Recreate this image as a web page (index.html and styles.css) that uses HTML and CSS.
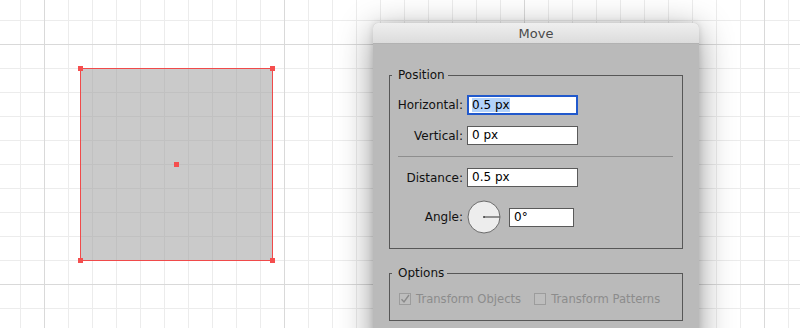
FILE: index.html
```html
<!DOCTYPE html>
<html>
	<head>
		<meta charset="UTF-8">
		<title>Move</title>
		<link rel="stylesheet" href="styles.css">
	</head>
	<body>
		<div id="canvas">
			<div class="shape"></div>
			<span class="handle h-tl"></span>
			<span class="handle h-tr"></span>
			<span class="handle h-bl"></span>
			<span class="handle h-br"></span>
			<span class="handle h-c"></span>

			<div id="dialog">
				<div class="titlebar">Move</div>
				<div class="body">
					<fieldset class="group">
						<legend>Position</legend>
						<div class="row first">
							<label>Horizontal:</label>
							<div class="field focus"><span class="sel">0.5 px</span></div>
						</div>
						<div class="row">
							<label>Vertical:</label>
							<div class="field">0 px</div>
						</div>
						<div class="sep"></div>
						<div class="row">
							<label>Distance:</label>
							<div class="field">0.5 px</div>
						</div>
						<div class="row angle">
							<label>Angle:</label>
							<svg class="dial" width="34" height="34" viewBox="0 0 34 34">
								<circle cx="17" cy="17" r="16" fill="#ededed" stroke="#6b6b6b" stroke-width="1"/>
								<line x1="17" y1="17" x2="33" y2="17" stroke="#5e5e5e" stroke-width="1.3"/>
								<circle cx="17" cy="17" r="1" fill="#444"/>
							</svg>
							<div class="field small">0°</div>
						</div>
					</fieldset>

					<fieldset class="group options">
						<legend>Options</legend>
						<div class="checks">
							<div class="check">
								<span class="box">
									<svg width="10" height="10" viewBox="0 0 10 10"><path d="M1.5 5.2 L4 8 L9 1" fill="none" stroke="#8a8a8a" stroke-width="1.4"/></svg>
								</span>
								<span>Transform Objects</span>
							</div>
							<div class="check">
								<span class="box"></span>
								<span>Transform Patterns</span>
							</div>
						</div>
					</fieldset>
				</div>
			</div>
		</div>
	</body>
</html>
```

FILE: styles.css
```css
html, body{
	margin: 0;
	padding: 0;
	overflow: hidden;
}
#canvas{
	position: relative;
	width: 800px;
	height: 328px;
	overflow: hidden;
	background-color: #fff;
	background-image:
		linear-gradient(to right, #d9d9d9 1px, transparent 1px),
		linear-gradient(to bottom, #d9d9d9 1px, transparent 1px),
		linear-gradient(to right, #ececec 1px, transparent 1px),
		linear-gradient(to bottom, #ececec 1px, transparent 1px);
	background-size: 240px 240px, 240px 240px, 24px 24px, 24px 24px;
	background-position: 44px 44px, 44px 44px, 20px 20px, 20px 20px;
	font-family: "DejaVu Sans", "Noto Sans", sans-serif;
	font-size: 12px;
	color: #111;
}

/* selected object on the artboard */
.shape{
	position: absolute;
	left: 80px;
	top: 68px;
	width: 193px;
	height: 193px;
	box-sizing: border-box;
	border: 1px solid #f04a4a;
	background-color: rgba(150,150,150,.5);
}
.handle{
	position: absolute;
	width: 5px;
	height: 5px;
	background-color: #f54e4e;
}
.h-tl{ left: 78px; top: 66px; }
.h-tr{ left: 270px; top: 66px; }
.h-bl{ left: 78px; top: 258px; }
.h-br{ left: 270px; top: 258px; }
.h-c{ left: 174px; top: 162px; }

/* dialog window */
#dialog{
	position: absolute;
	left: 373px;
	top: 23px;
	width: 326px;
	height: 330px;
	border-radius: 5px 5px 0 0;
	background-color: #bababa;
	box-shadow: 0 8px 34px rgba(0,0,0,.42), 0 0 6px rgba(0,0,0,.12);
}
.titlebar{
	height: 20px;
	line-height: 22px;
	text-align: center;
	font-size: 13px;
	color: #4a4a4a;
	border-radius: 5px 5px 0 0;
	background: linear-gradient(#efefef, #dcdcdc);
	border-bottom: 1px solid #b2b2b2;
}
.body{
	padding: 24px 16px 0 16px;
}
.group{
	margin: 0;
	padding: 0 9px 14px 2px;
	border: 1px solid #575757;
	min-width: 0;
}
.group legend{
	padding: 0 3px 0 6px;
	line-height: 14px;
	color: #111;
}
.row{
	display: flex;
	align-items: center;
	gap: 4px;
	margin-top: 11px;
}
.row.first{
	margin-top: 13px;
}
.row label{
	width: 71px;
	text-align: right;
}
.field{
	width: 111px;
	height: 19px;
	box-sizing: border-box;
	border: 1px solid #5a5a5a;
	background-color: #fff;
	padding-left: 4px;
	line-height: 17px;
	color: #000;
}
.field.focus{
	height: 20px;
	border: 2px solid #2159cc;
	padding-left: 3px;
	line-height: 16px;
}
.field.small{
	width: 65px;
	margin-left: 4px;
}
.sel{
	background-color: #b3d3fb;
}
.sep{
	height: 1px;
	margin: 11px 0 0 6px;
	background-color: #8e8e8e;
}
.row.angle{
	margin-top: 13px;
}
.dial{
	display: block;
}

.options{
	margin-top: 17px;
	padding-bottom: 14px;
}
.checks{
	display: flex;
	margin: 12px 0 0 7px;
	color: #8c8c8c;
	font-size: 11.6px;
	line-height: 14px;
	white-space: nowrap;
}
.check{
	display: flex;
	flex-shrink: 0;
	align-items: center;
	gap: 5px;
	margin-right: 13px;
}
.box{
	display: flex;
	align-items: center;
	justify-content: center;
	width: 12px;
	height: 12px;
	box-sizing: border-box;
	border: 1px solid #9c9c9c;
	background-color: #bdbdbd;
}
```
